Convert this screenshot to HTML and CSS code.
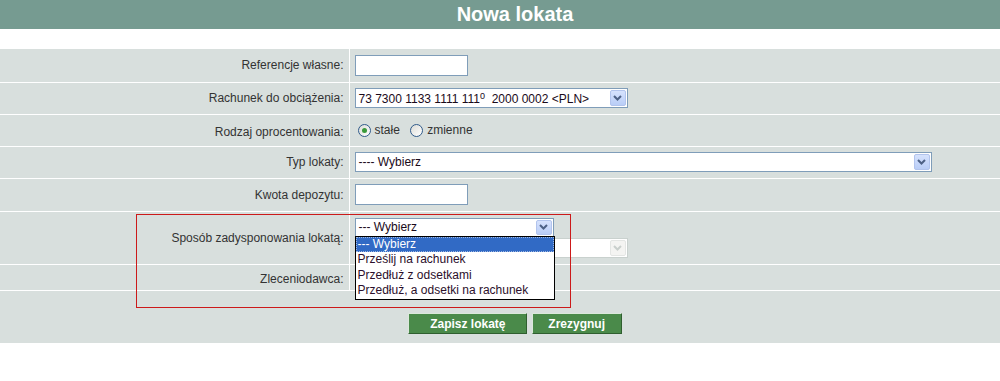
FILE: index.html
```html
<!DOCTYPE html>
<html lang="pl">
<head>
    <meta charset="UTF-8">
    <title>Nowa lokata</title>
    <link rel="stylesheet" href="styles.css">
</head>
<body>
    <div class="title-bar"><h1>Nowa lokata</h1></div>

    <div class="form-wrap">
        <table class="form">
            <tr class="r1">
                <td class="lbl">Referencje własne:</td>
                <td class="val"><span class="field short"></span></td>
            </tr>
            <tr class="r2">
                <td class="lbl">Rachunek do obciążenia:</td>
                <td class="val">
                    <span class="select acc">
                        <span class="sel-text">73 7300 1133 1111 111<span class="up">0</span>&nbsp; 2000 0002 &lt;PLN&gt;</span>
                        <span class="arrow"><svg width="9" height="6" viewBox="0 0 9 6"><path d="M1 1l3.5 3.5L8 1" fill="none" stroke="#4d6185" stroke-width="2"/></svg></span>
                    </span>
                </td>
            </tr>
            <tr class="r3">
                <td class="lbl">Rodzaj oprocentowania:</td>
                <td class="val">
                    <label class="radio"><span class="dot on"></span>stałe</label>
                    <label class="radio"><span class="dot"></span>zmienne</label>
                </td>
            </tr>
            <tr class="r4">
                <td class="lbl">Typ lokaty:</td>
                <td class="val">
                    <span class="select wide">
                        <span class="sel-text">---- Wybierz</span>
                        <span class="arrow"><svg width="9" height="6" viewBox="0 0 9 6"><path d="M1 1l3.5 3.5L8 1" fill="none" stroke="#4d6185" stroke-width="2"/></svg></span>
                    </span>
                </td>
            </tr>
            <tr class="r5">
                <td class="lbl">Kwota depozytu:</td>
                <td class="val"><span class="field short"></span></td>
            </tr>
            <tr class="r6">
                <td class="lbl">Sposób zadysponowania lokatą:</td>
                <td class="val">
                    <div class="combo">
                        <span class="select mid">
                            <span class="sel-text">--- Wybierz</span>
                            <span class="arrow"><svg width="9" height="6" viewBox="0 0 9 6"><path d="M1 1l3.5 3.5L8 1" fill="none" stroke="#4d6185" stroke-width="2"/></svg></span>
                        </span>
                        <ul class="dropdown">
                            <li class="hl">--- Wybierz</li>
                            <li>Prześlij na rachunek</li>
                            <li>Przedłuż z odsetkami</li>
                            <li>Przedłuż, a odsetki na rachunek</li>
                        </ul>
                    </div>
                    <span class="select acc disabled">
                        <span class="sel-text"></span>
                        <span class="arrow"><svg width="9" height="6" viewBox="0 0 9 6"><path d="M1 1l3.5 3.5L8 1" fill="none" stroke="#c9cfcc" stroke-width="2"/></svg></span>
                    </span>
                </td>
            </tr>
            <tr class="r7">
                <td class="lbl">Zleceniodawca:</td>
                <td class="val"></td>
            </tr>
            <tr class="r8">
                <td class="buttons" colspan="2">
                    <button class="btn save">Zapisz lokatę</button>
                    <button class="btn cancel">Zrezygnuj</button>
                </td>
            </tr>
        </table>
        <div class="mark"></div>
    </div>
</body>
</html>
```

FILE: styles.css
```css
* {
    box-sizing: border-box;
    margin: 0;
    padding: 0;
}
body {
    font-family: "Liberation Sans", Arial, sans-serif;
    font-size: 12px;
    color: #333;
    background-color: #fff;
}
.title-bar {
    height: 29px;
    background-color: #769b91;
    text-align: center;
    padding-left: 30px;
}
.title-bar h1 {
    font-size: 20px;
    line-height: 29px;
    font-weight: bold;
    color: #fff;
}
.form-wrap {
    position: relative;
    margin-top: 20px;
}
.form {
    width: 100%;
    border-collapse: collapse;
    background-color: #d8dfdd;
}
.form td {
    border-bottom: 1px solid #fff;
    vertical-align: middle;
    padding: 0;
}
.form .lbl {
    width: 349px;
    text-align: right;
    padding-right: 5px;
    border-right: 1px solid #fff;
}
.form .val {
    padding-left: 5px;
}
.r1 { height: 33px; }
.r2, .r3, .r4 { height: 32px; }
.r3 td { padding-top: 3px; }
.r5 { height: 33px; }
.r6 { height: 53px; }
.r7 { height: 26px; }
.r7 td { padding-top: 3px; }
.r8 { height: 53px; }
.r8 td { border-bottom: none; }

.field {
    display: block;
    height: 21px;
    background-color: #fff;
    border: 1px solid #7f9db9;
}
.field.short { width: 113px; }

.select {
    display: flex;
    align-items: center;
    height: 20px;
    background-color: #fff;
    border: 1px solid #7f9db9;
    padding: 1px;
}
.select.acc { width: 273px; }
.select.wide { width: 577px; }
.select.mid { width: 199px; height: 19px; }
.sel-text {
    flex: 1;
    padding-left: 2px;
    color: #1a0a1a;
    white-space: nowrap;
}
.sel-text .up {
    font-size: 9px;
    vertical-align: 4px;
}
.arrow {
    width: 16px;
    height: 100%;
    display: flex;
    align-items: center;
    justify-content: center;
    background: linear-gradient(#d6e2fd, #b9cdf7);
    border: 1px solid #b2c4ed;
    border-radius: 2px;
}
.select.disabled {
    border-color: #c9d1ce;
    margin-top: 1px;
}
.select.disabled .arrow {
    background: #f4f4f2;
    border-color: #e4e6e4;
}

.radio {
    display: inline-flex;
    align-items: center;
    margin-right: 4px;
    color: #333;
}
.dot {
    position: relative;
    width: 13px;
    height: 13px;
    margin: 0 4px 0 3px;
    border: 1px solid #2f5a8a;
    border-radius: 50%;
    background: linear-gradient(135deg, #dcdcd6, #fff);
}
.dot.on::after {
    content: "";
    position: absolute;
    left: 3px;
    top: 3px;
    width: 5px;
    height: 5px;
    border-radius: 50%;
    background-color: #3a9a3a;
}

.combo {
    position: relative;
    width: 199px;
}
.dropdown {
    position: absolute;
    left: 0;
    top: 18px;
    width: 200px;
    list-style: none;
    background-color: #fff;
    border: 1px solid #000;
    z-index: 2;
}
.dropdown li {
    height: 15.5px;
    line-height: 15px;
    padding-left: 2px;
    font-size: 12px;
    color: #2b0f2b;
    white-space: nowrap;
}
.dropdown li.hl {
    background-color: #316ac5;
    color: #fff;
    outline: 1px dotted #9fb7e0;
    outline-offset: -1px;
}

.form .buttons {
    text-align: center;
    padding-left: 30px;
    padding-top: 14px;
}
.btn {
    height: 21px;
    font-family: "Liberation Sans", Arial, sans-serif;
    font-size: 12px;
    font-weight: bold;
    color: #fff;
    background-color: #4a8a4a;
    border: 1px solid;
    border-color: #dbe8db #2f5f2f #2f5f2f #dbe8db;
    cursor: pointer;
}
.btn.save { width: 119px; }
.btn.cancel { width: 90px; margin-left: 1px; }

.mark {
    position: absolute;
    left: 136px;
    top: 165px;
    width: 435px;
    height: 94px;
    border: 1px solid #cc1a1a;
    pointer-events: none;
}
```
